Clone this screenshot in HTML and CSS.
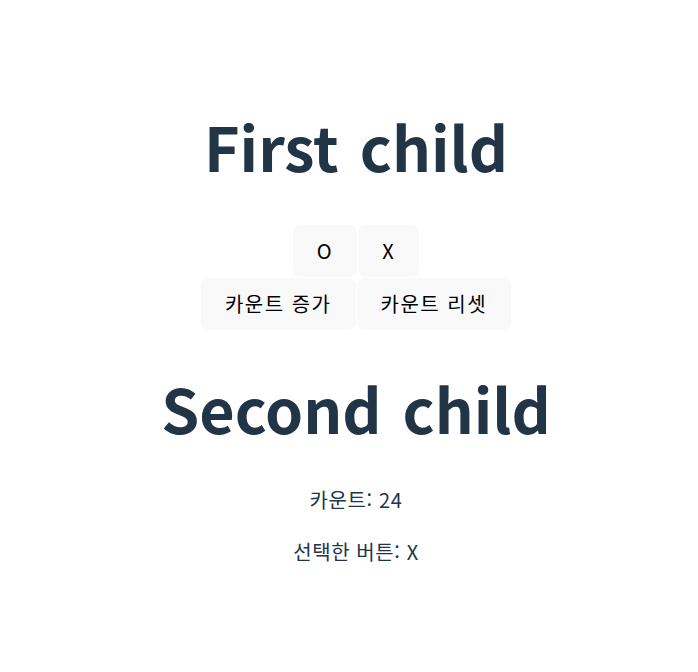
FILE: index.html
```html
<!DOCTYPE html>
<html lang="ko">
<head>
<meta charset="utf-8">
<link rel="stylesheet" href="styles.css">
</head>
<body>
<div class="app">
  <section class="first">
    <h1 class="title">First child</h1>
    <div class="rows">
      <div class="row">
        <button class="btn">O</button>
        <button class="btn">X</button>
      </div>
      <div class="row">
        <button class="btn">카운트 증가</button>
        <button class="btn">카운트 리셋</button>
      </div>
    </div>
  </section>
  <section class="second">
    <h1 class="title">Second child</h1>
    <p class="info">카운트: 24</p>
    <p class="info">선택한 버튼: X</p>
  </section>
</div>
</body>
</html>
```

FILE: styles.css
```css
html, body {
  margin: 0;
  padding: 0;
  background: #ffffff;
}
body {
  font-family: "Noto Sans CJK KR", "Noto Sans", sans-serif;
  color: #213547;
}
.app {
  display: flex;
  flex-direction: column;
  align-items: center;
  padding: 112px 0 0 14px;
}
section {
  display: flex;
  flex-direction: column;
  align-items: center;
}
.title {
  margin: 0;
  font-size: 61px;
  font-weight: 700;
  line-height: 67px;
  color: #213547;
  word-spacing: 4px;
}
.rows {
  margin-top: 46px;
  display: flex;
  flex-direction: column;
  align-items: center;
  gap: 1px;
}
.row {
  display: flex;
  justify-content: center;
  gap: 1px;
}
.btn {
  font-family: inherit;
  font-size: 20px;
  letter-spacing: 1.5px;
  line-height: 24px;
  padding: 13px 23px;
  border: 1px solid transparent;
  border-radius: 8px;
  background: #f9f9f9;
  color: #000;
  cursor: pointer;
}
.second {
  margin-top: 44px;
}
.second .title {
  margin-bottom: 47px;
}
.info {
  margin: 0;
  font-size: 20px;
  line-height: 24px;
  letter-spacing: 0.6px;
}
.info + .info {
  margin-top: 28px;
}
```
